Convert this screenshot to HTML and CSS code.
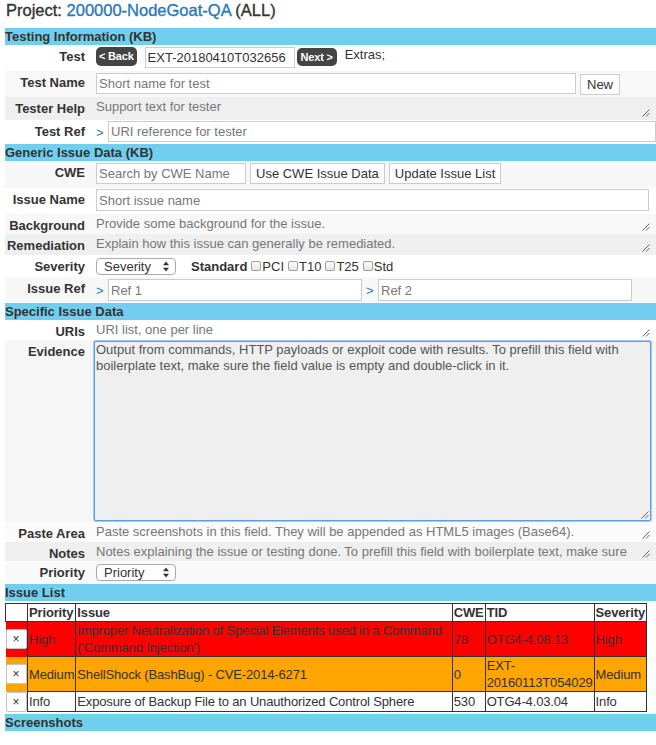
FILE: index.html
```html
<!DOCTYPE html>
<html>
<head>
<meta charset="utf-8">
<title>Project</title>
<link rel="stylesheet" href="styles.css">
</head>
<body>
<h1 class="title">Project: <a class="proj" href="#">200000-NodeGoat-QA</a> (ALL)</h1>

<div class="bar">Testing Information (KB)</div>
<div class="row r-test">
  <div class="label">Test</div>
  <div class="field">
    <span class="navbtn back">&lt; Back</span>
    <input class="inp test-id" type="text" value="EXT-20180410T032656">
    <span class="navbtn next">Next &gt;</span>
    <span class="extras">Extras;</span>
  </div>
</div>
<div class="row r-testname">
  <div class="label">Test Name</div>
  <div class="field">
    <input class="inp test-name" type="text" placeholder="Short name for test">
    <button class="btn" type="button">New</button>
  </div>
</div>
<div class="row r-help">
  <div class="label">Tester Help</div>
  <div class="area"><textarea class="ta" placeholder="Support text for tester"></textarea></div>
  <svg class="grip" width="8" height="8" viewBox="0 0 8 8"><path d="M7.5 0.5 L0.5 7.5 M7.5 4 L4 7.5" stroke="#666" stroke-width="1" fill="none"/></svg>
</div>
<div class="row r-ref">
  <div class="label">Test Ref</div>
  <div class="field">
    <span class="gt">&gt;</span>
    <input class="inp grow" type="text" placeholder="URI reference for tester">
  </div>
</div>

<div class="bar">Generic Issue Data (KB)</div>
<div class="row r-cwe">
  <div class="label">CWE</div>
  <div class="field">
    <input class="inp cwe" type="text" placeholder="Search by CWE Name">
    <button class="btn" type="button">Use CWE Issue Data</button>
    <button class="btn" type="button">Update Issue List</button>
  </div>
</div>
<div class="row r-issuename">
  <div class="label">Issue Name</div>
  <div class="field">
    <input class="inp issue-name" type="text" placeholder="Short issue name">
  </div>
</div>
<div class="row r-bg">
  <div class="label">Background</div>
  <div class="area"><textarea class="ta" placeholder="Provide some background for the issue."></textarea></div>
  <svg class="grip" width="8" height="8" viewBox="0 0 8 8"><path d="M7.5 0.5 L0.5 7.5 M7.5 4 L4 7.5" stroke="#666" stroke-width="1" fill="none"/></svg>
</div>
<div class="row r-rem">
  <div class="label">Remediation</div>
  <div class="area"><textarea class="ta" placeholder="Explain how this issue can generally be remediated."></textarea></div>
  <svg class="grip" width="8" height="8" viewBox="0 0 8 8"><path d="M7.5 0.5 L0.5 7.5 M7.5 4 L4 7.5" stroke="#666" stroke-width="1" fill="none"/></svg>
</div>
<div class="row r-sev">
  <div class="label">Severity</div>
  <div class="field centered">
    <span class="select">Severity<svg class="arrows" width="6" height="11" viewBox="0 0 6 11"><polygon points="0,4.2 3,0.5 6,4.2" fill="#333"/><polygon points="0,6.8 3,10.5 6,6.8" fill="#333"/></svg></span>
    <span class="std">Standard</span>
    <span class="chk"><span class="box"></span>PCI</span>
    <span class="chk"><span class="box"></span>T10</span>
    <span class="chk"><span class="box"></span>T25</span>
    <span class="chk"><span class="box"></span>Std</span>
  </div>
</div>
<div class="row r-issueref">
  <div class="label">Issue Ref</div>
  <div class="field">
    <span class="gt">&gt;</span>
    <input class="inp ref" type="text" placeholder="Ref 1">
    <span class="gt gt2">&gt;</span>
    <input class="inp ref" type="text" placeholder="Ref 2">
  </div>
</div>

<div class="bar">Specific Issue Data</div>
<div class="row r-uris">
  <div class="label">URIs</div>
  <div class="area"><textarea class="ta" placeholder="URI list, one per line"></textarea></div>
  <svg class="grip" width="8" height="8" viewBox="0 0 8 8"><path d="M7.5 0.5 L0.5 7.5 M7.5 4 L4 7.5" stroke="#666" stroke-width="1" fill="none"/></svg>
</div>
<div class="row r-evidence">
  <div class="label">Evidence</div>
  <div class="area"><textarea class="ta evidence" placeholder="Output from commands, HTTP payloads or exploit code with results. To prefill this field with&#10;boilerplate text, make sure the field value is empty and double-click in it."></textarea></div>
  <svg class="grip" width="8" height="8" viewBox="0 0 8 8"><path d="M7.5 0.5 L0.5 7.5 M7.5 4 L4 7.5" stroke="#666" stroke-width="1" fill="none"/></svg>
</div>
<div class="row r-paste">
  <div class="label">Paste Area</div>
  <div class="area"><textarea class="ta" placeholder="Paste screenshots in this field. They will be appended as HTML5 images (Base64)."></textarea></div>
  <svg class="grip" width="8" height="8" viewBox="0 0 8 8"><path d="M7.5 0.5 L0.5 7.5 M7.5 4 L4 7.5" stroke="#666" stroke-width="1" fill="none"/></svg>
</div>
<div class="row r-notes">
  <div class="label">Notes</div>
  <div class="area"><textarea class="ta" placeholder="Notes explaining the issue or testing done. To prefill this field with boilerplate text, make sure the field value is empty and double-click in it."></textarea></div>
  <svg class="grip" width="8" height="8" viewBox="0 0 8 8"><path d="M7.5 0.5 L0.5 7.5 M7.5 4 L4 7.5" stroke="#666" stroke-width="1" fill="none"/></svg>
</div>
<div class="row r-pri">
  <div class="label">Priority</div>
  <div class="field centered">
    <span class="select">Priority<svg class="arrows" width="6" height="11" viewBox="0 0 6 11"><polygon points="0,4.2 3,0.5 6,4.2" fill="#333"/><polygon points="0,6.8 3,10.5 6,6.8" fill="#333"/></svg></span>
  </div>
</div>

<div class="bar">Issue List</div>
<table class="issues">
  <thead>
    <tr>
      <th class="c-del"></th>
      <th class="c-pri">Priority</th>
      <th class="c-issue">Issue</th>
      <th class="c-cwe">CWE</th>
      <th class="c-tid">TID</th>
      <th class="c-sev">Severity</th>
    </tr>
  </thead>
  <tbody>
    <tr class="sev-high">
      <td class="del"><span class="delbtn">×</span></td>
      <td>High</td>
      <td>Improper Neutralization of Special Elements used in a Command ('Command Injection')</td>
      <td>78</td>
      <td>OTG4-4.08.13</td>
      <td>High</td>
    </tr>
    <tr class="sev-med">
      <td class="del"><span class="delbtn">×</span></td>
      <td>Medium</td>
      <td>ShellShock (BashBug) - CVE-2014-6271</td>
      <td>0</td>
      <td>EXT-20160113T054029</td>
      <td>Medium</td>
    </tr>
    <tr>
      <td class="del"><span class="delbtn">×</span></td>
      <td>Info</td>
      <td>Exposure of Backup File to an Unauthorized Control Sphere</td>
      <td>530</td>
      <td>OTG4-4.03.04</td>
      <td>Info</td>
    </tr>
  </tbody>
</table>
<div class="bar">Screenshots</div>
</body>
</html>
```
FILE: styles.css
```css
* { box-sizing: border-box; }

html { background: #fff; }

body {
  margin: 0 0 0 5px;
  width: 651px;
  font-family: "Liberation Sans", Arial, Helvetica, sans-serif;
  font-size: 13px;
  color: #333;
}

input, textarea, button {
  font-family: inherit;
  font-size: 13px;
  color: #333;
  margin: 0;
}

.title {
  margin: 0;
  padding-left: 1px;
  height: 28px;
  font-size: 16.5px;
  line-height: 20px;
  font-weight: normal;
  -webkit-text-stroke: 0.35px #333;
}

.title .proj {
  color: #2a79b8;
  -webkit-text-stroke-color: #2a79b8;
  text-decoration: none;
}

.bar {
  background: #71ceee;
  height: 17px;
  line-height: 17px;
  font-weight: bold;
  white-space: nowrap;
}

.row {
  position: relative;
  display: grid;
  grid-template-columns: 85px 1fr;
  column-gap: 4px;
  overflow: hidden;
}

.label {
  text-align: right;
  padding-right: 5px;
  padding-top: 4px;
  line-height: 16px;
  font-weight: bold;
  white-space: nowrap;
}

.field {
  display: flex;
  align-items: flex-start;
  gap: 4px;
  padding: 2px 0 0 2px;
}

.field.centered {
  align-items: center;
  padding-top: 0;
}

.area {
  display: flex;
}

/* resize grip drawn over the textarea corner */
.grip {
  position: absolute;
  right: 6px;
  bottom: 3px;
  display: block;
  z-index: 2;
  pointer-events: none;
}

.r-evidence .grip { bottom: 3px; right: 7px; }

/* row heights / backgrounds */
.r-test { height: 26px; }
.r-testname { height: 26px; background: #f8f8f8; }
.r-help { height: 23px; background: #efefef; }
.r-ref { height: 24px; }
.r-ref .field { padding-top: 1px; }
.r-cwe { height: 27px; background: #f7f7f7; }
.r-issuename { height: 26px; }
.r-issuename .field { padding-top: 1px; }
.r-bg { height: 20px; background: #f8f8f8; }
.r-rem { height: 21px; background: #efefef; }
.r-sev { height: 22px; }
.r-issueref { height: 26px; background: #f7f7f7; }
.r-uris { height: 20px; }
.r-evidence { height: 182px; background: #f6f6f6; }
.r-paste { height: 20px; background: #fbfbfb; }
.r-notes { height: 19px; background: #efefef; }
.r-pri { height: 23px; background: #f9f9f9; }

/* inputs */
.inp {
  height: 21px;
  border: 1px solid #ccc;
  background: #fff;
  padding: 0 2px;
  outline: none;
}

.inp::placeholder { color: #777; }

.test-id { width: 150px; margin: 0 -2px 0 4px; }
.test-name { width: 480px; }
.issue-name { width: 553px; height: 22px; }
.cwe { width: 150px; }
.grow { flex: 1; height: 21px; }
.ref { width: 254px; height: 22px; }

.gt {
  color: #2a79b8;
  line-height: 16px;
  padding-top: 4px;
  width: 8px;
}

.gt2 { margin-left: 0; }

.btn {
  height: 21px;
  border: 1px solid #ccc;
  background: #fff;
  padding: 0 6px;
  line-height: 19px;
  margin-top: 1px;
}

.r-cwe .btn { margin-top: 0; padding: 0 5px; }

.navbtn {
  display: inline-block;
  height: 19px;
  line-height: 19px;
  padding: 0 3px;
  background: #444;
  color: #fff;
  font-weight: bold;
  font-size: 11px;
  letter-spacing: -0.2px;
  border-radius: 5px;
  white-space: nowrap;
}

.navbtn.next {
  padding: 0 4px;
  margin-top: 1px;
  height: 18px;
  line-height: 18px;
}

.extras {
  margin-left: 4px;
  line-height: 16px;
}

/* textareas */
.ta {
  width: 557px;
  height: 100%;
  border: none;
  background: transparent;
  padding: 2px 16px 2px 2px;
  line-height: 16px;
  resize: none;
  overflow: hidden;
  outline: none;
}

.ta::placeholder { color: #777; }

.evidence {
  height: 180px;
  margin-top: 1px;
  background: #efefef;
  border: 1px solid #5d9ee3;
  box-shadow: 0 0 0 1px #a6c9f0;
  border-radius: 2px;
  padding: 0 14px 0 1px;
}

.evidence::placeholder { color: #555; }

/* select */
.select {
  display: inline-flex;
  align-items: center;
  justify-content: space-between;
  width: 80px;
  height: 17px;
  border: 1px solid #aaa;
  border-radius: 4px;
  background: #fff;
  padding: 0 6px 0 7px;
  line-height: 15px;
}

.arrows { display: block; }

.std {
  font-weight: bold;
  margin-left: 11px;
}

.chk {
  display: inline-flex;
  align-items: center;
  gap: 1px;
}

.box {
  display: inline-block;
  width: 10px;
  height: 10px;
  border: 1px solid #a0a0a0;
  border-radius: 2px;
  background: linear-gradient(#fcfcfc, #e6e6e6);
}

/* issue table */
.issues {
  border-collapse: collapse;
  width: 642px;
  margin: 2px 0 2px 0;
  font-size: 13px;
  letter-spacing: -0.15px;
}

.issues th,
.issues td {
  border: 1px solid #333;
  padding: 0 1px;
  line-height: 17px;
  text-align: left;
  vertical-align: middle;
}

.issues th { font-weight: bold; }

.c-del { width: 22px; }
.c-pri { width: 47px; }
.c-cwe { width: 31px; }
.c-tid { width: 107px; }
.c-sev { width: 51px; }

.issues td.del {
  border: none;
  padding: 0;
}

.sev-high { background: #ff0000; }
.sev-med { background: #ffa500; }

.delbtn {
  display: block;
  width: 21px;
  height: 20px;
  border: 1px solid #c4c4c4;
  border-radius: 2px;
  background: #fff;
  font-size: 12px;
  line-height: 18px;
  text-align: center;
  color: #333;
  letter-spacing: 0;
}
```
